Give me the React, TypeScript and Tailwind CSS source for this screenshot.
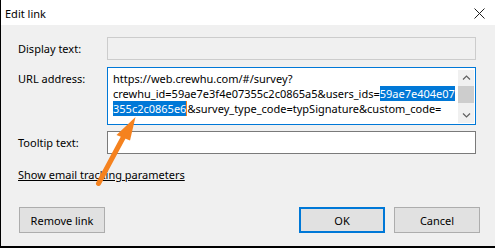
const urlLines = {
    first: "https://web.crewhu.com/#/survey?",
    second: "crewhu_id=59ae7e3f4e07355c2c0865a5&users_ids=",
    secondSel: "59ae7e404e07",
    thirdSel: "355c2c0865e6",
    third: "&survey_type_code=typSignature&custom_code=",
};

function Chevron({ down }: { down?: boolean }) {
    return (
        <svg width="9" height="6" viewBox="0 0 9 6" className="block">
            <path
                d={down ? "M1 1.5l3.5 3.5 3.5-3.5" : "M1 4.5l3.5-3.5 3.5 3.5"}
                fill="none"
                stroke="#606060"
                strokeWidth={1.2}
            />
        </svg>
    );
}

function ScrollBar() {
    return (
        <div className="mt-[2px] mb-px mr-px flex w-[16px] flex-col bg-[#f0f0f0]">
            <div className="flex h-[16px] items-center justify-center">
                <Chevron />
            </div>
            <div className="h-[17px] bg-[#cdcdcd]" />
            <div className="flex-1" />
            <div className="flex h-[16px] items-center justify-center">
                <Chevron down />
            </div>
        </div>
    );
}

function Button({ label, primary }: { label: string; primary?: boolean }) {
    return (
        <div
            className={
                primary
                    ? "flex h-[26px] w-[86px] items-center justify-center border-2 border-[#0078d7] bg-[#e1e1e1]"
                    : "flex h-[26px] w-[86px] items-center justify-center border border-[#adadad] bg-[#e1e1e1]"
            }
        >
            {label}
        </div>
    );
}

export default function App() {
    return (
        <div className="relative h-[248px] w-[495px] overflow-hidden border-b-2 border-l border-black bg-[#f0f0f0] font-[family-name:'Noto_Sans',sans-serif] text-[11px] leading-[15px] text-black">
            {/* title bar */}
            <div className="flex h-[25px] items-center justify-between bg-white pl-[4px] pr-[10px] pt-px">
                <span>Edit link</span>
                <svg width="11" height="11" viewBox="0 0 11 11" className="block">
                    <path d="M0.5 0.5l10 10M10.5 0.5l-10 10" stroke="#1e1e1e" strokeWidth={1} />
                </svg>
            </div>

            <div className="flex flex-col pl-[17px] pr-[15px] pt-[12px]">
                <div className="flex h-[23px] items-center">
                    <span className="w-[89px]">Display text:</span>
                    <div className="h-[23px] w-[369px] border border-[#cccccc] bg-[#f0f0f0]" />
                </div>

                <div className="mt-[7px] flex items-start">
                    <span className="w-[89px] pt-[4px]">URL address:</span>
                    <div className="flex h-[58px] w-[369px] border border-[#0078d7] bg-white">
                        <div className="flex-1 overflow-hidden whitespace-nowrap pl-[5px] pt-[3px]">
                            <div>{urlLines.first}</div>
                            <div>
                                {urlLines.second}
                                <span className="bg-[#0078d7] text-white">{urlLines.secondSel}</span>
                            </div>
                            <div>
                                <span className="bg-[#0078d7] text-white">{urlLines.thirdSel}</span>
                                <span className="inline-block h-[15px] w-px bg-[#f5821f] align-top" />
                                {urlLines.third}
                            </div>
                        </div>
                        <ScrollBar />
                    </div>
                </div>

                <div className="mt-[6px] flex h-[23px] items-center">
                    <span className="w-[89px]">Tooltip text:</span>
                    <div className="h-[23px] w-[369px] border border-[#7a7a7a] bg-white" />
                </div>

                <div className="mt-[13px]">
                    <span className="underline">Show email tracking parameters</span>
                </div>

                <div className="mt-[25px] flex">
                    <div className="ml-px">
                        <Button label="Remove link" />
                    </div>
                    <div className="ml-auto flex gap-[9px]">
                        <Button label="OK" primary />
                        <Button label="Cancel" />
                    </div>
                </div>
            </div>

            {/* annotation arrow */}
            <svg
                className="pointer-events-none absolute left-[-1px] top-0 h-[248px] w-[495px]"
                viewBox="0 0 495 248"
            >
                <path d="M98.5 183.5L124 136" stroke="#f5821f" strokeWidth={5} strokeLinecap="round" />
                <polygon points="135.5,117 116.5,135 130,140.5" fill="#f5821f" />
            </svg>
        </div>
    );
}
